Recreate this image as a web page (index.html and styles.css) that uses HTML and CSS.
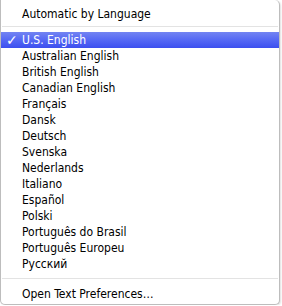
FILE: index.html
```html
<!DOCTYPE html>
<html lang="en">

<head>
  <meta charset="UTF-8">
  <title>Language menu</title>
  <link rel="stylesheet" href="styles.css">
</head>

<body>
  <ul class="menu">
    <li class="item">Automatic by Language</li>
    <li class="separator"></li>
    <li class="item selected"><span class="check">✓</span>U.S. English</li>
    <li class="item">Australian English</li>
    <li class="item">British English</li>
    <li class="item">Canadian English</li>
    <li class="item">Français</li>
    <li class="item">Dansk</li>
    <li class="item">Deutsch</li>
    <li class="item">Svenska</li>
    <li class="item">Nederlands</li>
    <li class="item">Italiano</li>
    <li class="item">Español</li>
    <li class="item">Polski</li>
    <li class="item">Português do Brasil</li>
    <li class="item">Português Europeu</li>
    <li class="item">Русский</li>
    <li class="separator bottom"></li>
    <li class="item">Open Text Preferences…</li>
  </ul>
</body>

</html>
```

FILE: styles.css
```css
* {
  margin: 0;
  padding: 0;
  box-sizing: border-box;
}

body {
  background-color: #fff;
  font-family: "DejaVu Sans Condensed", "DejaVu Sans", sans-serif;
  font-size: 12px;
  color: #000;
}

.menu {
  list-style: none;
  width: 280px;
  height: 305px;
  padding-top: 6px;
  background-color: #fff;
  border: 1px solid #bdbdbd;
  border-top: none;
  border-radius: 0 5px 5px 5px;
  box-shadow: 1px 1px 2px rgba(0, 0, 0, 0.12);
}

.item {
  position: relative;
  height: 16px;
  line-height: 16px;
  padding-left: 21px;
  white-space: nowrap;
}

.separator {
  height: 10px;
  margin: 0 1px;
  background: linear-gradient(transparent 4px, #e3e3e3 4px, #e3e3e3 5px, transparent 5px);
}

.separator.bottom {
  height: 14px;
  background: linear-gradient(transparent 6px, #e3e3e3 6px, #e3e3e3 7px, transparent 7px);
}

.item.selected {
  color: #fff;
  background: linear-gradient(#7384f2, #5568f4 50%, #3c4fef);
}

.check {
  position: absolute;
  left: 5px;
  top: 0;
  font-family: "DejaVu Sans", sans-serif;
  font-size: 14px;
  font-weight: bold;
}
```
